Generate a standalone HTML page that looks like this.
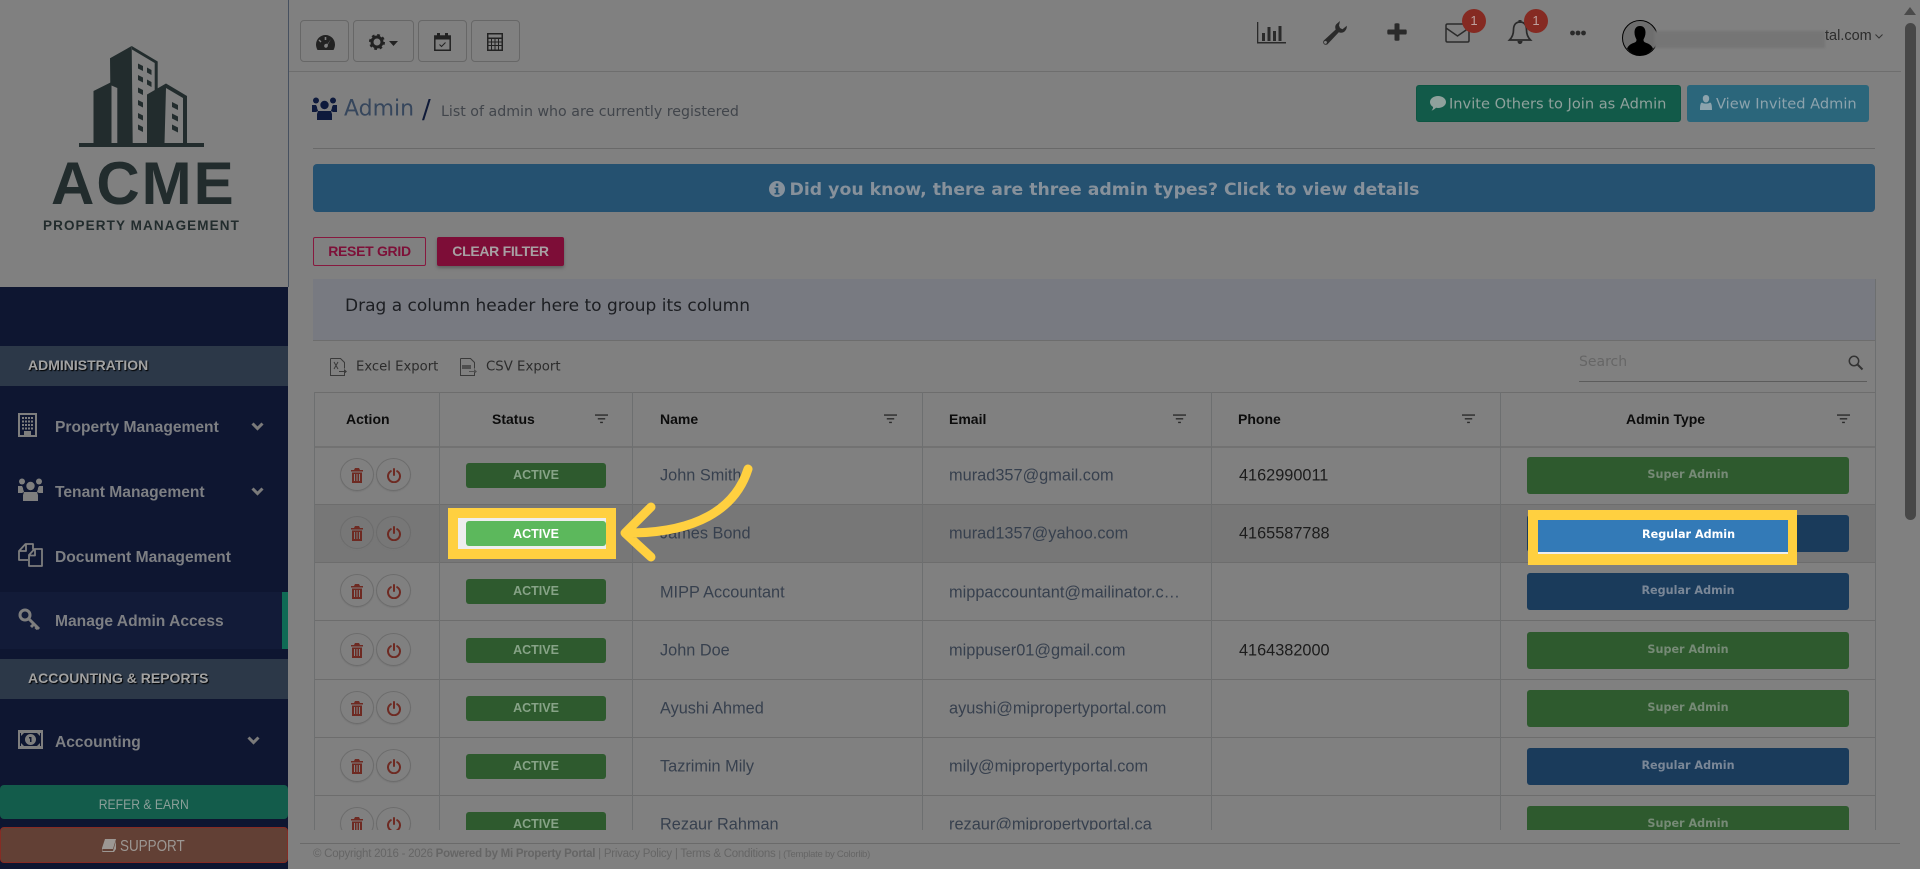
<!DOCTYPE html>
<html><head><meta charset="utf-8"><title>Admin</title>
<style>
*{box-sizing:border-box}
html,body{margin:0;padding:0;width:1920px;height:869px;overflow:hidden;background:#808080}
body{position:relative;font-family:"Liberation Sans",sans-serif;color:#333}
.a{position:absolute;white-space:nowrap}
.dv{font-family:"DejaVu Sans",sans-serif}
.vc{transform:translateY(-50%)}
.tb{position:absolute;top:20px;height:42px;border:1px solid #676767;border-radius:4px}
.sec{position:absolute;left:0;width:288px;height:40px;background:#2c3848;color:#a2a2a2;font-weight:bold;font-size:14px;line-height:38px;padding-left:28px;text-shadow:1px 1px 1px #000}
.mi{position:absolute;left:55px;color:#7d7f83;font-weight:bold;font-size:15.6px;white-space:nowrap;transform:translateY(-50%)}
.hl{position:absolute;background:#6d6f70;width:1px}
.rl{position:absolute;left:314px;width:1561px;height:1px;background:#6d6d6d}
.th{position:absolute;top:419px;transform:translateY(-50%);font-weight:bold;font-size:14px;color:#0c0c0c;white-space:nowrap}
.n{position:absolute;left:660px;font-size:16.3px;color:#37404e;transform:translateY(-50%);white-space:nowrap}
.e{position:absolute;left:949px;font-size:16.35px;color:#37404e;transform:translateY(-50%);white-space:nowrap}
.p{position:absolute;left:1239px;font-size:16.3px;color:#1c1c1c;transform:translateY(-50%);white-space:nowrap}
.st{position:absolute;left:466px;width:140px;height:25px;background:#2e5a2e;border-radius:3px;color:#87a387;font-weight:bold;font-size:12.5px;text-align:center;line-height:25px}
.at{position:absolute;left:1527px;width:322px;height:37px;border-radius:3px;font-family:"DejaVu Sans",sans-serif;font-weight:bold;font-size:11.2px;text-align:center;line-height:36px}
.g{background:#2e5a2e;color:#768a76}
.b{background:#1a3b5b;color:#7a8797}
.c1,.c2{position:absolute;height:33px;border:1px solid #6c6c6c;border-radius:50%;box-shadow:0 1px 1px #777}
.c1{left:340px;width:34px}.c2{left:376px;width:35px}
.i{position:absolute;overflow:visible}
</style></head><body>
<svg width="0" height="0" style="position:absolute">
<symbol id="trash" viewBox="0 0 12 15"><path fill="#6e2a22" d="M4 0h4l1 2h3v1.500H0V2h3zM1 4.500h10V15H1zM3 6v7h1V6zm2.500 0v7h1V6zM8 6v7h1V6z" fill-rule="evenodd"/></symbol>
<symbol id="pow" viewBox="0 0 14 15"><path fill="none" stroke="#6e2a22" stroke-width="2" stroke-linecap="round" d="M7 1v6M3.800 3.200a6 6 0 1 0 6.400 0"/></symbol>
<symbol id="flt" viewBox="0 0 14 10"><path fill="#2a2a2a" d="M0 0h14v1.500H0zM3 4h8v1.500H3zM5.500 8h3v1.500h-3z"/></symbol>
<symbol id="users" viewBox="0 0 25 23"><g fill="currentColor"><circle cx="4" cy="3.500" r="3"/><circle cx="21" cy="3.500" r="3"/><circle cx="12.500" cy="8" r="4.200"/><path d="M0 8h4l1 2c0 2 1 3 1 4l-2 1H0zM25 8h-4l-1 2c0 2-1 3-1 4l2 1h4zM6 14h13l1 3v6H5v-6z"/></g></symbol>
</svg>

<!-- SIDEBAR -->
<div class="a" style="left:288px;top:0;width:1px;height:287px;background:#46505f"></div>
<svg class="i" style="left:0;top:0" width="288" height="160" viewBox="0 0 288 160">
<g fill="#222c2d">
<path d="M79 143h125v4H79z"/>
<path d="M93.500 91L111.500 82v61h-18z"/>
<path d="M110 58.300L131.700 46l1 97.500H117.300V88l-7-3z"/>
<path d="M131.700 46l26 15.500v29h-3V63L132 49.500z"/>
<path d="M147 94.500L166 83.500l21 12.500v47.500h-4V98l-17-10-1.500 55.500H147z"/>
<path d="M138 63.500l5 2.500v5l-5-2.500zM147 67.500l4.500 2.500v5L147 72.500zM138 75l5 2.500v5l-5-2.500zM147 79.500l4.500 2.500v5L147 84.500zM138 87.500l5 2.500v5l-5-2.500zM138 100l5 2.500v5l-5-2.500zM138 113l5 2.500v5l-5-2.500zM138 124.500l5 2.500v5l-5-2.500zM172 102l6 3v5l-6-3zM172 113.500l6 3v5l-6-3zM172 124.500l6 3v5l-6-3z"/>
</g></svg>
<div class="a" style="left:51px;top:150px;font-size:60px;font-weight:bold;letter-spacing:2px;color:#222c2d;line-height:68px">ACME</div>
<div class="a" style="left:43px;top:218px;font-size:13.500px;font-weight:bold;letter-spacing:1.1px;color:#222c2d;line-height:16px">PROPERTY MANAGEMENT</div>

<div class="a" style="left:0;top:287px;width:288px;height:582px;background:#0e1631"></div>
<div class="sec" style="top:346px">ADMINISTRATION</div>
<div class="a" style="left:0;top:592px;width:288px;height:57px;background:#121b38"></div>
<div class="a" style="left:282px;top:592px;width:6px;height:57px;background:#0f6b55"></div>
<div class="sec" style="top:659px">ACCOUNTING &amp; REPORTS</div>
<div class="mi" style="top:428px">Property Management</div>
<div class="mi" style="top:493px">Tenant Management</div>
<div class="mi" style="top:558px">Document Management</div>
<div class="mi" style="top:622px">Manage Admin Access</div>
<div class="mi" style="top:743px">Accounting</div>
<!-- sidebar icons -->
<svg class="i" style="left:18px;top:413px" width="20" height="24" viewBox="0 0 20 24"><path fill="#7e7e7e" fill-rule="evenodd" d="M0 0h19v24H0zM2 2v20h4v-4h7v4h4V2zM4 4h2v2H4zm3 0h2v2H7zm3 0h2v2h-2zm3 0h2v2h-2zM4 7.500h2v2H4zm3 0h2v2H7zm3 0h2v2h-2zm3 0h2v2h-2zM4 11h2v2H4zm3 0h2v2H7zm3 0h2v2h-2zm3 0h2v2h-2zM4 14.500h2v2H4zm3 0h2v2H7zm3 0h2v2h-2zm3 0h2v2h-2z"/></svg>
<svg class="i" style="left:18px;top:478px;color:#7e7e7e" width="25" height="23"><use href="#users"/></svg>
<svg class="i" style="left:18px;top:543px" width="25" height="24" viewBox="0 0 25 24"><path fill="none" stroke="#7e7e7e" stroke-width="1.800" stroke-linejoin="round" d="M10 17H1V8l6.500-7H15v5.500M8 1v7H1.500"/><path fill="none" stroke="#7e7e7e" stroke-width="1.800" stroke-linejoin="round" d="M11 23V12l5.500-6H24v17zM17 6v6.500h-6"/></svg>
<svg class="i" style="left:18px;top:608px" width="23" height="23" viewBox="0 0 23 23"><g fill="none" stroke="#7e7e7e" stroke-width="3"><circle cx="7" cy="7" r="5"/><path d="M11 11l10 10M16 16l-3 3M19.500 19l-2 2"/></g></svg>
<svg class="i" style="left:18px;top:730px" width="25" height="19" viewBox="0 0 25 19"><path fill="#7e7e7e" fill-rule="evenodd" d="M0 0h25v19H0zM2 3v13h21V3zM12.500 4a5.500 5.500 0 1 1 0 11 5.500 5.500 0 0 1 0-11zM11 7v1.500h1V12h1.500V7zM3 3h3l-3 3zM22 3h-3l3 3zM3 16h3l-3-3zM22 16h-3l3-3z"/></svg>
<svg class="i" style="left:251px;top:422px" width="13" height="9" viewBox="0 0 13 9"><path fill="none" stroke="#7a7a7a" stroke-width="3" d="M1.500 1.500l5 5 5-5"/></svg>
<svg class="i" style="left:251px;top:487px" width="13" height="9" viewBox="0 0 13 9"><path fill="none" stroke="#7a7a7a" stroke-width="3" d="M1.500 1.500l5 5 5-5"/></svg>
<svg class="i" style="left:247px;top:736px" width="13" height="9" viewBox="0 0 13 9"><path fill="none" stroke="#7a7a7a" stroke-width="3" d="M1.500 1.500l5 5 5-5"/></svg>
<div class="a" style="left:0;top:785px;width:288px;height:34px;background:#135c4b;border-radius:4px;color:#8b9f99;font-size:14px;text-align:center;line-height:38px"><span style="display:inline-block;transform:scaleX(.87)">REFER &amp; EARN</span></div>
<div class="a" style="left:0;top:827px;width:288px;height:36px;background:#624035;border:1px solid #862c24;border-radius:4px;color:#9c9793;font-size:16px;text-align:center;line-height:38px"><svg width="14" height="13" viewBox="0 0 14 13" style="vertical-align:-1px;margin-right:0"><path fill="#9c9793" d="M3 0h11l-3 10H1c-1 0-1 2 0 2h10l3-10v8l-2 3H1C0 13-.5 11 0 9z"/></svg><span style="display:inline-block;transform:scaleX(.84);transform-origin:0 50%;width:66px;text-align:left;margin-left:4px">SUPPORT</span></div>

<!-- TOP BAR -->
<div class="a" style="left:289px;top:71px;width:1612px;height:1px;background:#6e6e6e"></div>
<div class="tb" style="left:300px;width:49px"></div>
<div class="tb" style="left:353px;width:61px"></div>
<div class="tb" style="left:418px;width:49px"></div>
<div class="tb" style="left:471px;width:49px"></div>
<svg class="i" style="left:316px;top:35px" width="19" height="15" viewBox="0 0 19 15"><path fill="#222" fill-rule="evenodd" d="M9.500 0a9.500 9.500 0 0 1 9.500 9.500c0 2-.5 3.500-1.500 5.500H1.500C.5 13 0 11.500 0 9.500A9.500 9.500 0 0 1 9.500 0zM8.700 2v3h1.600V2zM3.500 4.500l-1 1 2 2 1-1zM15 4l-3.500 5c-1-.5-3-.2-3.300 1.500-.3 1.500 1 2.500 2 2.300 1.500-.3 2-2 1.500-3z"/></svg>
<svg class="i" style="left:369px;top:34px" width="16" height="16" viewBox="0 0 16 16"><circle cx="8" cy="8" r="5" fill="none" stroke="#222" stroke-width="3"/><circle cx="8" cy="8" r="6.800" fill="none" stroke="#222" stroke-width="2.400" stroke-dasharray="2.700 2.640"/></svg>
<svg class="i" style="left:389px;top:41px" width="9" height="5"><path fill="#222" d="M0 0h9L4.500 5z"/></svg>
<svg class="i" style="left:434px;top:33px" width="17" height="18" viewBox="0 0 17 18"><path fill="none" stroke="#222" stroke-width="1.500" d="M.8 3h15.400v14.200H.8z"/><path fill="#222" d="M3 0h3v4H3zM11 0h3v4h-3zM1 3h15v3.500H1z"/><path fill="none" stroke="#222" d="M5.500 11.500l2 2 4-4"/></svg>
<svg class="i" style="left:487px;top:33px" width="16" height="18" viewBox="0 0 16 18"><path fill="#222" fill-rule="evenodd" d="M0 0h16v18H0zM1.500 1.500v3h13v-3zM1.500 6v2.500h2.500V6zM5 6v2.500h2.500V6zM8.500 6v2.500H11V6zM12 6v2.500h2.500V6zM1.500 9.500V12H4V9.500zM5 9.500V12h2.500V9.500zM8.500 9.500V12H11V9.500zM12 9.500V12h2.500V9.500zM1.500 13v3.500H4V13zM5 13v3.500h2.500V13zM8.500 13v3.500H11V13zM12 13v3.500h2.500V13z"/></svg>

<!-- right icons -->
<svg class="i" style="left:1257px;top:22px" width="29" height="22" viewBox="0 0 29 22"><path fill="#2a2a2a" d="M0 0h1.300v20H29v1.500H0zM5 11h3v8H5zM10.500 5h3v14h-3zM16 9h3v10h-3zM21.500 4h3v15h-3z"/></svg>
<svg class="i" style="left:1323px;top:21px" width="24" height="24" viewBox="0 0 24 24"><path fill="#2a2a2a" fill-rule="evenodd" d="M17 0l-3.500 3c-1.500 1.500-1.500 3.500-.8 5.500L.8 19.500C-.5 21 .5 24 3 23.800c1 0 1.500-.5 2-1l10.800-11.500c2 .8 4.500.5 6-1 1.500-1.500 2.200-3.500 2-5.500l-4.300 3.500L17 7l-1-2.500zM3 20a1.500 1.500 0 1 0 0 2.800A1.500 1.500 0 0 0 3 20z"/></svg>
<svg class="i" style="left:1387px;top:23px" width="20" height="18" viewBox="0 0 20 18"><path fill="#2a2a2a" d="M7.500 1c0-1 5-1 5 0v5.500H19c1 0 1 5 0 5h-6.500V17c0 1-5 1-5 0v-5.500H1c-1 0-1-5 0-5h6.500z"/></svg>
<svg class="i" style="left:1445px;top:23px" width="25" height="20" viewBox="0 0 25 20"><path fill="none" stroke="#2a2a2a" stroke-width="1.500" d="M1 2.500Q1 1 2.500 1h20Q24 1 24 2.500v15q0 1.500-1.500 1.500h-20Q1 19 1 17.500zM1 5l11.500 8L24 5"/></svg>
<svg class="i" style="left:1508px;top:20px" width="24" height="25" viewBox="0 0 24 25"><path fill="none" stroke="#2a2a2a" stroke-width="1.700" d="M12 2c-5 0-6.500 4-6.500 8 0 4-1 7-4 10h21c-3-3-4-6-4-10 0-4-1.500-8-6.500-8z"/><path fill="#2a2a2a" d="M9.500 21h5c0 4-5 4-5 0zM10.500 0h3v3h-3z"/></svg>
<div class="a" style="left:1462px;top:9px;width:24px;height:24px;border-radius:50%;background:#852a22;color:#bda09d;font-size:13px;text-align:center;line-height:24px">1</div>
<div class="a" style="left:1524px;top:9px;width:24px;height:24px;border-radius:50%;background:#852a22;color:#bda09d;font-size:13px;text-align:center;line-height:24px">1</div>
<svg class="i" style="left:1570px;top:30px" width="16" height="6"><circle cx="2.500" cy="3" r="2.400" fill="#2a2a2a"/><circle cx="8" cy="3" r="2.400" fill="#2a2a2a"/><circle cx="13.500" cy="3" r="2.400" fill="#2a2a2a"/></svg>
<svg class="i" style="left:1622px;top:20px" width="36" height="36" viewBox="0 0 36 36"><circle cx="18" cy="18" r="17.500" fill="#6e6e6e" stroke="#000"/><path fill="#000" d="M18 6c4 0 5.500 3 5.500 6.500 0 3-1 5-2 7 0 2 .5 2.500 3 3.500 3 1 5 2.500 6.500 5.500A17.500 17.500 0 0 1 18 35.500 17.500 17.500 0 0 1 5 28.500C6.500 25.500 8.500 24 11.500 23c2.500-1 3-1.500 3-3.500-1-2-2-4-2-7C12.500 9 14 6 18 6z"/></svg>
<div class="a" style="left:1654px;top:31px;width:171px;height:17px;background:#757575;filter:blur(1px)"></div>
<div class="a vc" style="left:1825px;top:36px;font-size:14.500px;color:#2c2c2c">tal.com</div>
<svg class="i" style="left:1875px;top:34px" width="8" height="5"><path fill="none" stroke="#333" d="M.5.500L4 4 7.500.500"/></svg>

<!-- page header -->
<svg class="i" style="left:312px;top:97px;color:#0e1a3c" width="25" height="23"><use href="#users"/></svg>
<div class="a vc dv" style="left:344px;top:109px;font-size:22px;color:#36465c">Admin</div>
<div class="a vc dv" style="left:422px;top:110px;font-size:26px;color:#0f1a38">/</div>
<div class="a vc dv" style="left:441px;top:112px;font-size:14.200px;color:#41454b">List of admin who are currently registered</div>
<div class="a" style="left:1416px;top:85px;width:265px;height:37px;background:#125a49;border:1px solid #0d5542;border-radius:3px"></div>
<svg class="i" style="left:1430px;top:96px" width="16" height="15" viewBox="0 0 16 15"><path fill="#8fa19c" d="M8 0c4.400 0 8 2.600 8 6s-3.600 6-8 6c-.7 0-1.300 0-2-.2C4.800 13 3 14.500 1.500 14.500c1-1 1.500-2 1.600-3.500C1.200 9.900 0 8 0 6c0-3.400 3.600-6 8-6z"/></svg>
<div class="a vc dv" style="left:1449px;top:104px;font-size:14.600px;color:#8fa19c">Invite Others to Join as Admin</div>
<div class="a" style="left:1687px;top:85px;width:182px;height:37px;background:#2b667b;border-radius:3px"></div>
<svg class="i" style="left:1700px;top:95px" width="12" height="15" viewBox="0 0 12 15"><path fill="#8ca3ad" d="M6 0c2 0 3.200 1.500 3.200 3.500S8 7.500 6 7.500 2.800 5.500 2.800 3.500 4 0 6 0zM2 7.500C3.500 9 8.500 9 10 7.500c1.500.5 2 2.500 2 7.500H0c0-5 .5-7 2-7.500z"/></svg>
<div class="a vc dv" style="left:1716px;top:104px;font-size:14.600px;color:#8ca3ad">View Invited Admin</div>
<div class="a" style="left:313px;top:148px;width:1562px;height:1px;background:#696969"></div>

<!-- banner -->
<div class="a dv" style="left:313px;top:164px;width:1562px;height:48px;background:#255170;border-radius:4px;color:#87919b;font-weight:bold;font-size:17.300px;text-align:center;line-height:53px"><svg width="16" height="16" viewBox="0 0 16 16" style="vertical-align:-2px;margin-right:5px"><path fill="#87919b" fill-rule="evenodd" d="M8 0a8 8 0 1 1 0 16A8 8 0 0 1 8 0zM6.800 2.500v2.500h2.500V2.500zM5.500 6.500V8h1.300v4H5.500v1.500h5V12H9.300V6.500z"/></svg>Did you know, there are three admin types? Click to view details</div>

<div class="a" style="left:313px;top:237px;width:113px;height:29px;border:1px solid #87193f;border-radius:2px;color:#7d1038;font-weight:bold;font-size:14px;letter-spacing:-.3px;text-align:center;line-height:27px">RESET GRID</div>
<div class="a" style="left:437px;top:237px;width:127px;height:29px;background:#7d0d37;border-radius:2px;color:#a8a0a3;font-weight:bold;font-size:14px;letter-spacing:-.3px;text-align:center;line-height:29px;box-shadow:0 2px 3px #5e5e5e">CLEAR FILTER</div>

<!-- grid -->
<div class="a" style="left:313px;top:279px;width:1562px;height:61px;background:#787a81"></div>
<div class="a vc dv" style="left:345px;top:306px;font-size:17px;color:#1c1e22">Drag a column header here to group its column</div>
<div class="rl" style="top:340px;left:313px;width:1562px"></div>
<svg class="i" style="left:330px;top:358px" width="17" height="18" viewBox="0 0 17 18"><path fill="none" stroke="#3a3a3a" d="M.5.500h10l4 4v6M14.500 14.500v3H.5V.500"/><path fill="none" stroke="#3a3a3a" d="M4 4l4 7M8 4l-4 7"/><path fill="#3a3a3a" d="M9 13h5v-2l3 2.500-3 2.500v-2H9z"/></svg>
<div class="a vc dv" style="left:356px;top:367px;font-size:13.200px;color:#2c2c2c">Excel Export</div>
<svg class="i" style="left:460px;top:358px" width="17" height="18" viewBox="0 0 17 18"><path fill="none" stroke="#3a3a3a" d="M.5.500h10l4 4v6M14.500 14.500v3H.5V.500"/><path fill="#3a3a3a" d="M2 7h9v4H2zM9 13h5v-2l3 2.500-3 2.500v-2H9z" opacity=".7"/></svg>
<div class="a vc dv" style="left:486px;top:367px;font-size:13.300px;color:#2c2c2c">CSV Export</div>
<div class="a vc dv" style="left:1579px;top:362px;font-size:14px;color:#666">Search</div>
<svg class="i" style="left:1848px;top:355px" width="15" height="15" viewBox="0 0 15 15"><circle cx="6" cy="6" r="4.700" fill="none" stroke="#333" stroke-width="1.500"/><path stroke="#333" stroke-width="2" d="M9.500 9.500l5 5"/></svg>
<div class="a" style="left:1579px;top:381px;width:288px;height:1px;background:#5c5c5c"></div>

<div class="rl" style="top:392px"></div>
<div class="rl" style="top:446px;height:2px;background:#727272"></div>
<div class="th" style="left:346px">Action</div>
<div class="th" style="left:492px">Status</div>
<div class="th" style="left:660px">Name</div>
<div class="th" style="left:949px">Email</div>
<div class="th" style="left:1238px">Phone</div>
<div class="th" style="left:1626px">Admin Type</div>
<svg class="i" style="left:595px;top:414px" width="13" height="10"><use href="#flt"/></svg>
<svg class="i" style="left:884px;top:414px" width="13" height="10"><use href="#flt"/></svg>
<svg class="i" style="left:1173px;top:414px" width="13" height="10"><use href="#flt"/></svg>
<svg class="i" style="left:1462px;top:414px" width="13" height="10"><use href="#flt"/></svg>
<svg class="i" style="left:1837px;top:414px" width="13" height="10"><use href="#flt"/></svg>

<div class="a" style="left:0;top:0;width:1920px;height:830px;overflow:hidden">
<div class="a" style="left:314px;top:505px;width:1561px;height:58px;background:#777"></div>
<div class="rl" style="top:504px"></div><div class="rl" style="top:562px"></div><div class="rl" style="top:620px"></div><div class="rl" style="top:679px"></div><div class="rl" style="top:737px"></div><div class="rl" style="top:795px"></div>
<div class="hl" style="left:314px;top:392px;height:440px"></div>
<div class="hl" style="left:439px;top:392px;height:440px"></div>
<div class="hl" style="left:632px;top:392px;height:440px"></div>
<div class="hl" style="left:922px;top:392px;height:440px"></div>
<div class="hl" style="left:1211px;top:392px;height:440px"></div>
<div class="hl" style="left:1500px;top:392px;height:440px"></div>
<div class="hl" style="left:1875px;top:279px;height:553px"></div>

<div class="c1" style="top:458px"></div><div class="c2" style="top:458px"></div>
<svg class="i" style="left:351px;top:468px" width="12" height="15"><use href="#trash"/></svg><svg class="i" style="left:387px;top:468px" width="14" height="15"><use href="#pow"/></svg>
<div class="c1" style="top:516px"></div><div class="c2" style="top:516px"></div>
<svg class="i" style="left:351px;top:526px" width="12" height="15"><use href="#trash"/></svg><svg class="i" style="left:387px;top:526px" width="14" height="15"><use href="#pow"/></svg>
<div class="c1" style="top:574px"></div><div class="c2" style="top:574px"></div>
<svg class="i" style="left:351px;top:584px" width="12" height="15"><use href="#trash"/></svg><svg class="i" style="left:387px;top:584px" width="14" height="15"><use href="#pow"/></svg>
<div class="c1" style="top:633px"></div><div class="c2" style="top:633px"></div>
<svg class="i" style="left:351px;top:643px" width="12" height="15"><use href="#trash"/></svg><svg class="i" style="left:387px;top:643px" width="14" height="15"><use href="#pow"/></svg>
<div class="c1" style="top:691px"></div><div class="c2" style="top:691px"></div>
<svg class="i" style="left:351px;top:701px" width="12" height="15"><use href="#trash"/></svg><svg class="i" style="left:387px;top:701px" width="14" height="15"><use href="#pow"/></svg>
<div class="c1" style="top:749px"></div><div class="c2" style="top:749px"></div>
<svg class="i" style="left:351px;top:759px" width="12" height="15"><use href="#trash"/></svg><svg class="i" style="left:387px;top:759px" width="14" height="15"><use href="#pow"/></svg>
<div class="c1" style="top:807px"></div><div class="c2" style="top:807px"></div>
<svg class="i" style="left:351px;top:817px" width="12" height="15"><use href="#trash"/></svg><svg class="i" style="left:387px;top:817px" width="14" height="15"><use href="#pow"/></svg>

<div class="st" style="top:463px">ACTIVE</div>
<div class="st" style="top:579px">ACTIVE</div>
<div class="st" style="top:638px">ACTIVE</div>
<div class="st" style="top:696px">ACTIVE</div>
<div class="st" style="top:754px">ACTIVE</div>
<div class="st" style="top:812px">ACTIVE</div>

<div class="n" style="top:476px">John Smith</div>
<div class="n" style="top:534px">James Bond</div>
<div class="n" style="top:593px">MIPP Accountant</div>
<div class="n" style="top:651px">John Doe</div>
<div class="n" style="top:709px">Ayushi Ahmed</div>
<div class="n" style="top:767px">Tazrimin Mily</div>
<div class="n" style="top:825px">Rezaur Rahman</div>
<div class="e" style="top:476px">murad357@gmail.com</div>
<div class="e" style="top:534px">murad1357@yahoo.com</div>
<div class="e" style="top:593px">mippaccountant@mailinator.c…</div>
<div class="e" style="top:651px">mippuser01@gmail.com</div>
<div class="e" style="top:709px">ayushi@mipropertyportal.com</div>
<div class="e" style="top:767px">mily@mipropertyportal.com</div>
<div class="e" style="top:825px">rezaur@mipropertyportal.ca</div>
<div class="p" style="top:476px">4162990011</div>
<div class="p" style="top:534px">4165587788</div>
<div class="p" style="top:651px">4164382000</div>

<div class="at g" style="top:457px">Super Admin</div>
<div class="at b" style="top:515px">Regular Admin</div>
<div class="at b" style="top:573px">Regular Admin</div>
<div class="at g" style="top:632px">Super Admin</div>
<div class="at g" style="top:690px">Super Admin</div>
<div class="at b" style="top:748px">Regular Admin</div>
<div class="at g" style="top:806px">Super Admin</div>
</div>

<!-- highlights -->
<div class="a" style="left:448px;top:508px;width:168px;height:51px;background:#ffd040"></div>
<div class="a" style="left:458px;top:518px;width:148px;height:31px;background:#eee"></div>
<div class="a" style="left:466px;top:521px;width:140px;height:25px;background:#5cb85c;border-radius:3px;color:#fff;font-weight:bold;font-size:12.5px;text-align:center;line-height:26px">ACTIVE</div>
<div class="a" style="left:1528px;top:510px;width:269px;height:55px;background:#ffd040"></div>
<div class="a" style="left:1538px;top:520px;width:250px;height:34px;background:#eee"></div>
<div class="a dv" style="left:1538px;top:520px;width:250px;height:32px;background:#337ab7;color:#fff;font-weight:bold;font-size:11.2px;line-height:30px;padding-left:104px">Regular Admin</div>
<svg class="i" style="left:0;top:0" width="1920" height="869" viewBox="0 0 1920 869"><path fill="none" stroke="#ffd040" stroke-width="9" stroke-linecap="round" stroke-linejoin="round" d="M748 469C735 510 695 533 628 533M651 507L625 533L651 557"/></svg>

<!-- footer -->
<div class="a" style="left:300px;top:843px;width:1600px;height:1px;background:#6a6a6a"></div>
<div class="a vc" style="left:313px;top:854px;font-size:11.500px;letter-spacing:-.25px;color:#656565">© Copyright 2016 - 2026 <b>Powered by Mi Property Portal</b> | Privacy Policy | Terms &amp; Conditions <span style="font-size:9.500px">| (Template by Colorlib)</span></div>

<!-- scrollbar -->
<svg class="i" style="left:1904px;top:7px" width="12" height="8"><path fill="#4a4a4a" d="M6 0l6 8H0z"/></svg>
<div class="a" style="left:1905px;top:23px;width:11px;height:497px;background:#474747;border-radius:6px"></div>
</body></html>
